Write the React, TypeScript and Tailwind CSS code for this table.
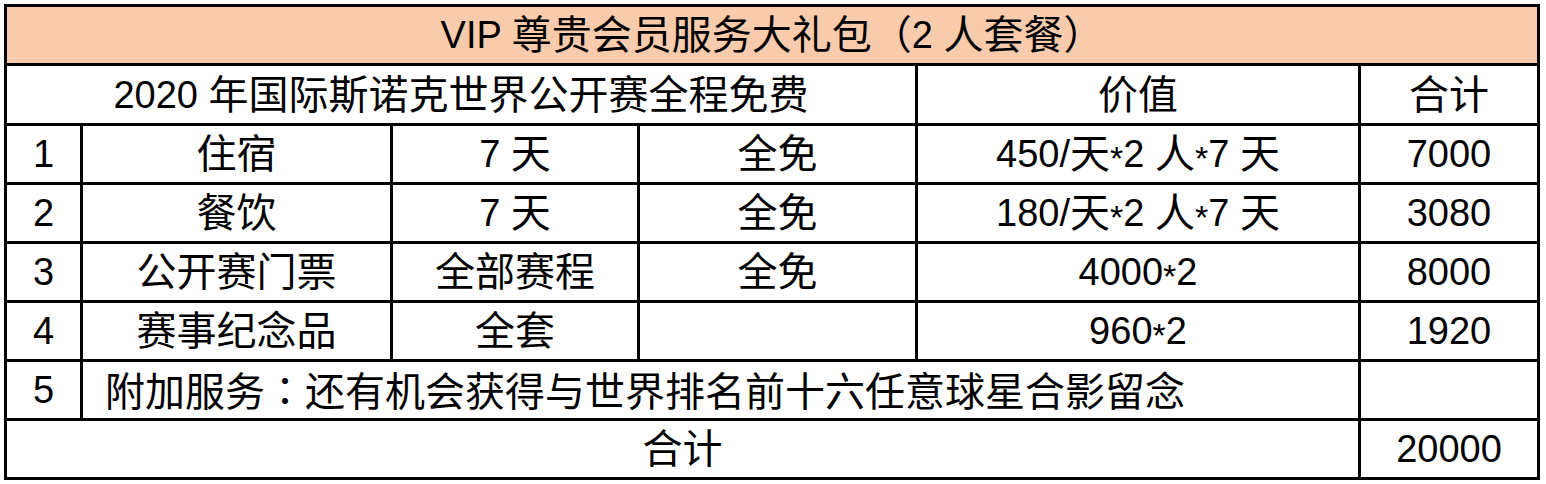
const font = { fontFamily: '"Liberation Sans", "Noto Sans CJK SC", sans-serif' }

type Row = {
  no: string
  item: string
  period: string
  fee: string
  value: string
  total: string
}

const rows: Row[] = [
  { no: "1", item: "住宿", period: "7 天", fee: "全免", value: "450/天*2 人*7 天", total: "7000" },
  { no: "2", item: "餐饮", period: "7 天", fee: "全免", value: "180/天*2 人*7 天", total: "3080" },
  { no: "3", item: "公开赛门票", period: "全部赛程", fee: "全免", value: "4000*2", total: "8000" },
  { no: "4", item: "赛事纪念品", period: "全套", fee: "", value: "960*2", total: "1920" },
]

// cjk glyphs are a touch bigger than the latin digits in the sheet
function Txt({ text }: { text: string }) {
  const parts = text.split(/([\u3000-\u9fff\uff00-\uffef]+|\*)/).filter(Boolean)
  return (
    <>
      {parts.map((p, i) => {
        if (p === "*") {
          return (
            <span key={i} className="inline-block translate-y-[4px] text-[34px]">
              *
            </span>
          )
        }
        if (/[\u3000-\u9fff\uff00-\uffef]/.test(p)) {
          return (
            <span key={i} className="text-[40px]">
              {p.split("：").map((s, j) =>
                j === 0 ? (
                  s
                ) : (
                  <span key={j}>
                    <span style={{ fontFamily: '"Noto Sans CJK JP", sans-serif' }}>：</span>
                    {s}
                  </span>
                ),
              )}
            </span>
          )
        }
        return (
          <span key={i} className="text-[38px]">
            {p}
          </span>
        )
      })}
    </>
  )
}

function Cell({
  text,
  className = "",
  bg = "bg-white",
}: {
  text?: string
  className?: string
  bg?: string
}) {
  return (
    <div className={`flex items-center whitespace-pre leading-none ${bg} ${className}`}>
      {text && <Txt text={text} />}
    </div>
  )
}

export default function App() {
  return (
    <div className="h-[484px] w-[1546px] bg-white pl-[4px] pt-[4px] text-black" style={font}>
      <div className="grid w-[1536px] grid-cols-[73px_307px_244px_275px_440px_176px] grid-rows-[56px_57px_56px_56px_56px_56px_56px_56px] gap-[3px] bg-black p-[3px]">
        <Cell className="col-span-6 justify-center" bg="bg-[#f8cbad]" text="VIP 尊贵会员服务大礼包（2 人套餐）" />

        <Cell className="col-span-4 justify-center" text="2020 年国际斯诺克世界公开赛全程免费" />
        <Cell className="justify-center" text="价值" />
        <Cell className="justify-center" text="合计" />

        {rows.map((r) => (
          <div key={r.no} className="contents">
            <Cell className="justify-center" text={r.no} />
            <Cell className="justify-center" text={r.item} />
            <Cell className="justify-center" text={r.period} />
            <Cell className="justify-center" text={r.fee} />
            <Cell className="justify-center" text={r.value} />
            <Cell className="justify-center" text={r.total} />
          </div>
        ))}

        <Cell className="justify-center" text="5" />
        <Cell className="col-span-4 justify-start pl-[22px]" text="附加服务：还有机会获得与世界排名前十六任意球星合影留念" />
        <Cell />

        <Cell className="col-span-5 justify-center" text="合计" />
        <Cell className="justify-center" text="20000" />
      </div>
    </div>
  )
}
